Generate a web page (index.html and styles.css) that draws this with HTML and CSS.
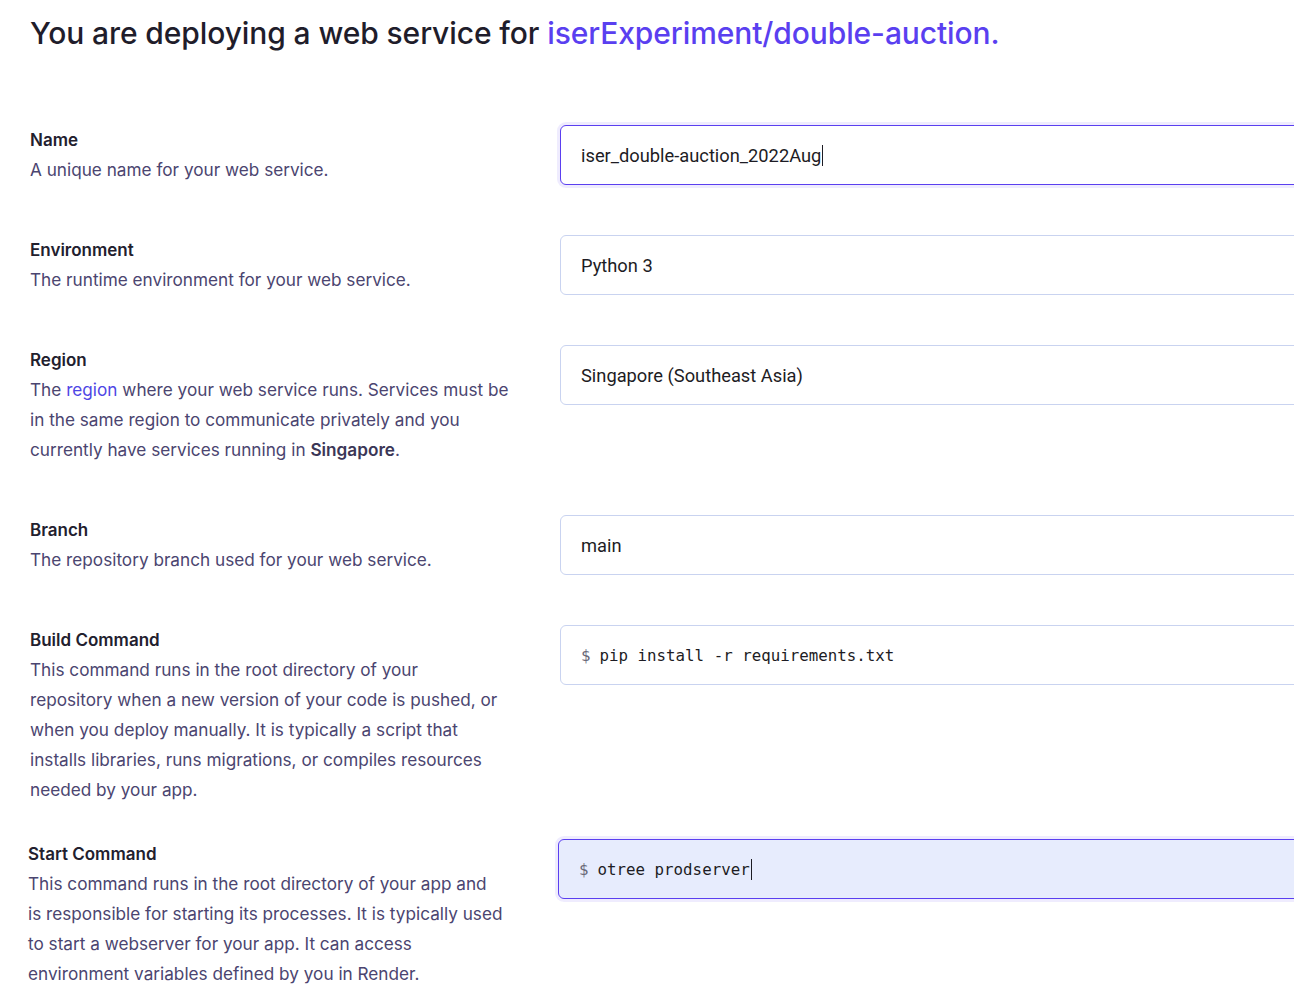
FILE: index.html
```html
<!DOCTYPE html>
<html lang="en">
<head>
<meta charset="utf-8">
<title>Deploy web service</title>
<link rel="stylesheet" href="styles.css">
</head>
<body>
<main class="page">
  <h1 class="title">You are deploying a web service for <span class="repo">iserExperiment/double-auction.</span></h1>

  <section class="field field-first">
    <div class="info">
      <div class="label">Name</div>
      <p class="desc">A unique name for your web service.</p>
    </div>
    <div class="control">
      <div class="input focused">iser_double-auction_2022Aug<span class="caret"></span></div>
    </div>
  </section>

  <section class="field">
    <div class="info">
      <div class="label">Environment</div>
      <p class="desc">The runtime environment for your web service.</p>
    </div>
    <div class="control">
      <div class="input">Python 3</div>
    </div>
  </section>

  <section class="field">
    <div class="info">
      <div class="label">Region</div>
      <p class="desc">The <a class="link">region</a> where your web service runs. Services must be in the same region to communicate privately and you currently have services running in <strong>Singapore</strong>.</p>
    </div>
    <div class="control">
      <div class="input">Singapore (Southeast Asia)</div>
    </div>
  </section>

  <section class="field">
    <div class="info">
      <div class="label">Branch</div>
      <p class="desc">The repository branch used for your web service.</p>
    </div>
    <div class="control">
      <div class="input">main</div>
    </div>
  </section>

  <section class="field">
    <div class="info">
      <div class="label">Build Command</div>
      <p class="desc desc-narrow">This command runs in the root directory of your repository when a new version of your code is pushed, or when you deploy manually. It is typically a script that installs libraries, runs migrations, or compiles resources needed by your app.</p>
    </div>
    <div class="control">
      <div class="input mono"><span class="prompt">$</span>pip install -r requirements.txt</div>
    </div>
  </section>

  <section class="field field-shifted">
    <div class="info">
      <div class="label">Start Command</div>
      <p class="desc desc-start">This command runs in the root directory of your app and is responsible for starting its processes. It is typically used to start a webserver for your app. It can access environment variables defined by you in Render.</p>
    </div>
    <div class="control">
      <div class="input mono focused filled"><span class="prompt">$</span>otree prodserver<span class="caret"></span></div>
    </div>
  </section>
</main>
</body>
</html>
```

FILE: styles.css
```css
html, body {
  margin: 0;
  padding: 0;
  background: #ffffff;
  overflow: hidden;
}

body {
  font-family: Inter, "Noto Sans", "Liberation Sans", sans-serif;
  color: #22202e;
  width: 1294px;
  height: 1000px;
}

.page {
  padding: 15px 0 0 30px;
  display: flex;
  flex-direction: column;
}

.title {
  margin: 0;
  font-size: 30px;
  line-height: 36px;
  font-weight: 500;
  color: #1f1d2b;
  letter-spacing: -0.1px;
}

.repo {
  color: #5a3ff0;
}

.field {
  display: grid;
  grid-template-columns: 530px 800px;
  margin-top: 50px;
}

.field-first {
  margin-top: 74px;
}

.field-shifted {
  margin-top: 34px;
  margin-left: -2px;
}

.label {
  font-size: 17px;
  line-height: 30px;
  font-weight: 600;
  color: #22202e;
}

.desc {
  margin: 0;
  max-width: 480px;
  font-size: 17.2px;
  line-height: 30px;
  color: #4b4570;
}

.desc-narrow {
  max-width: 473px;
}

.desc-start {
  max-width: 475.5px;
}

.desc strong {
  font-weight: 600;
  color: #3b3656;
}

.link {
  color: #4f46e5;
}

.input {
  box-sizing: border-box;
  height: 60px;
  display: flex;
  align-items: center;
  padding: 0 20px;
  border: 1px solid #c9d3f0;
  border-radius: 6px;
  font-family: Roboto, "Liberation Sans", sans-serif;
  font-size: 18.3px;
  color: #1d1c24;
  background: #ffffff;
}

.input.focused {
  border-color: #5b3ff0;
  box-shadow: 0 0 0 3px rgba(120, 100, 245, 0.12);
}

.input.filled {
  background: #e7ecfd;
}

.mono {
  font-family: "DejaVu Sans Mono", "Liberation Mono", monospace;
  font-size: 15.8px;
  color: #1d1c24;
}

.prompt {
  color: #6b6a7a;
  margin-right: 9px;
}

.caret {
  display: inline-block;
  width: 1px;
  height: 21px;
  background: #1d1c24;
  margin-left: 1px;
}
```
